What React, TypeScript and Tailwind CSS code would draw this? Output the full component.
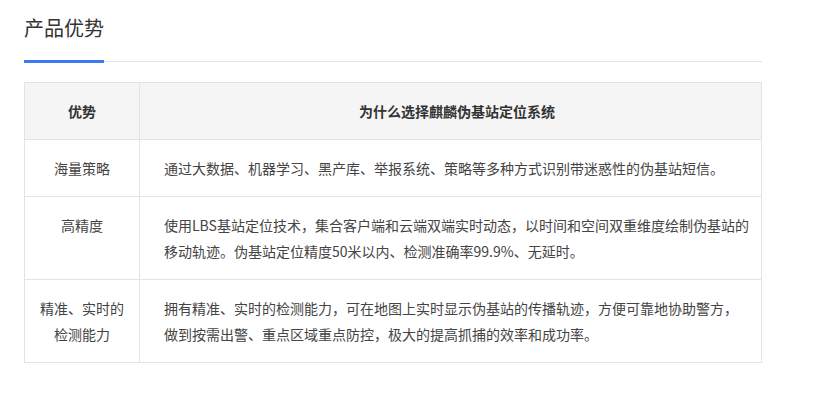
import React from "react";

// Each body is split into the lines as they are laid out in the cell.
const rows: { title: string[]; body: string[] }[] = [
  {
    title: ["海量策略"],
    body: ["通过大数据、机器学习、黑产库、举报系统、策略等多种方式识别带迷惑性的伪基站短信。"],
  },
  {
    title: ["高精度"],
    body: [
      "使用LBS基站定位技术，集合客户端和云端双端实时动态，以时间和空间双重维度绘制伪基站的",
      "移动轨迹。伪基站定位精度50米以内、检测准确率99.9%、无延时。",
    ],
  },
  {
    title: ["精准、实时的", "检测能力"],
    body: [
      "拥有精准、实时的检测能力，可在地图上实时显示伪基站的传播轨迹，方便可靠地协助警方，",
      "做到按需出警、重点区域重点防控，极大的提高抓捕的效率和成功率。",
    ],
  },
];

function Lines({ lines }: { lines: string[] }) {
  return (
    <>
      {lines.map((l, i) => (
        <span key={i} className="block whitespace-nowrap">
          {l}
        </span>
      ))}
    </>
  );
}

export default function App() {
  return (
    <div
      className="w-[822px] h-[394px] bg-white text-[#333]"
      style={{ fontFamily: '"Noto Sans CJK SC", "Microsoft YaHei", sans-serif' }}
    >
      <div className="ml-6 w-[738px] pt-[13px]">
        {/* section heading with accent underline */}
        <div className="relative border-b border-[#e3e3e3] h-[49px]">
          <h2 className="text-[20px] leading-[30px] font-normal text-[#333]">产品优势</h2>
          <div className="absolute left-0 bottom-[-2px] w-[80px] h-[3px] bg-[#3c7af0]" />
        </div>

        <table className="mt-[20px] w-full border-collapse text-[14px] leading-[26px] table-fixed">
          <colgroup>
            <col className="w-[115px]" />
            <col />
          </colgroup>
          <thead>
            <tr className="bg-[#f5f5f5]">
              <th className="border border-[#e3e3e3] py-[15px] px-3 font-bold text-center text-[#333]">
                优势
              </th>
              <th className="border border-[#e3e3e3] py-[15px] pl-[13px] font-bold text-center text-[#333]">
                为什么选择麒麟伪基站定位系统
              </th>
            </tr>
          </thead>
          <tbody>
            {rows.map((r, i) => (
              <tr key={i}>
                <td className="border border-[#e3e3e3] py-[15px] px-2 text-center align-top text-[#444]">
                  <Lines lines={r.title} />
                </td>
                <td className="border border-[#e3e3e3] py-[15px] pl-6 pr-2 align-top text-[#444]">
                  <Lines lines={r.body} />
                </td>
              </tr>
            ))}
          </tbody>
        </table>
      </div>
    </div>
  );
}
